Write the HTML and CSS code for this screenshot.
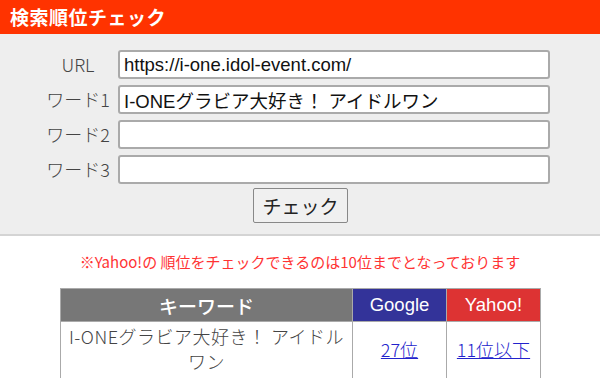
FILE: index.html
```html
<!DOCTYPE html>
<html>
<head>
  <title>検索順位チェック</title>
  <meta charset="UTF-8" />
  <link rel="stylesheet" href="styles.css">
</head>
<body>
  <h1 class="title">検索順位チェック</h1>

  <form class="check-form">
    <label for="url">URL</label>
    <input type="text" id="url" value="https://i-one.idol-event.com/" />
    <label for="word1">ワード1</label>
    <input type="text" id="word1" value="I-ONEグラビア大好き！ アイドルワン" />
    <label for="word2">ワード2</label>
    <input type="text" id="word2" />
    <label for="word3">ワード3</label>
    <input type="text" id="word3" />
    <div class="submit-row">
      <button type="button">チェック</button>
    </div>
  </form>

  <p class="notice">※Yahoo!の 順位をチェックできるのは10位までとなっております</p>

  <table class="result">
    <tr>
      <th class="kw">キーワード</th>
      <th class="google">Google</th>
      <th class="yahoo">Yahoo!</th>
    </tr>
    <tr>
      <td class="kw">I-ONEグラビア大好き！ アイドルワン</td>
      <td><a href="#">27位</a></td>
      <td><a href="#">11位以下</a></td>
    </tr>
  </table>
</body>
</html>
```

FILE: styles.css
```css
body {
  margin: 0;
  padding: 0;
  background: #fff;
  font-family: "Noto Sans CJK JP", "Liberation Sans", sans-serif;
  color: #333;
}

/* Header */
.title {
  margin: 0;
  height: 34px;
  line-height: 34px;
  padding-left: 10px;
  background-color: #ff3300;
  color: #fff;
  font-size: 19px;
  font-weight: bold;
  letter-spacing: 0.5px;
}

/* Form */
.check-form {
  display: grid;
  grid-template-columns: 110px 432px;
  column-gap: 8px;
  row-gap: 6px;
  align-items: center;
  background-color: #eeeeee;
  padding: 16px 0 11px;
  border-bottom: 2px solid #d4d4d4;
}

.check-form label {
  padding-left: 46px;
  text-align: center;
  font-size: 18px;
  font-weight: 300;
  color: #444;
  line-height: 29px;
}

.check-form input {
  box-sizing: border-box;
  height: 29px;
  width: 432px;
  margin: 0;
  padding: 0 4px;
  border: 2px solid #aaa;
  border-radius: 3px;
  background: #fff;
  font-family: "Liberation Sans", "Noto Sans CJK JP", sans-serif;
  font-size: 18.5px;
  color: #111;
}

.submit-row {
  grid-column: 1 / 3;
  padding-left: 253px;
  margin-top: -2px;
}

.submit-row button {
  width: 95px;
  height: 35px;
  background: #f0f0f0;
  border: 1px solid #888;
  border-radius: 2px;
  font-family: "Noto Sans CJK JP", sans-serif;
  font-size: 19px;
  color: #222;
  padding: 0;
}

/* Notice */
.notice {
  margin: 14px 0 0;
  text-align: center;
  color: #ff3333;
  font-size: 15px;
  line-height: 24px;
}

/* Result table */
.result {
  margin: 14px 0 0 60px;
  width: 481px;
  border-collapse: collapse;
}

.result th,
.result td {
  border: 1px solid #aaa;
  text-align: center;
}

.result th {
  height: 32px;
  padding: 0;
  color: #fff;
  font-size: 19px;
  font-weight: 500;
}

.result th.kw {
  width: 291px;
  background-color: #777;
}

.result th.google {
  width: 93px;
  background-color: #333399;
  font-family: "Liberation Sans", sans-serif;
  font-size: 18.5px;
  font-weight: normal;
}

.result th.yahoo {
  background-color: #dd3333;
  font-family: "Liberation Sans", sans-serif;
  font-size: 18.5px;
  font-weight: normal;
}

.result td {
  padding: 2px 4px 4px;
  font-size: 18px;
  font-weight: 300;
  line-height: 25px;
  color: #444;
}

.result td.kw {
  letter-spacing: 0.5px;
}

.result td a {
  color: #2222cc;
}
```
